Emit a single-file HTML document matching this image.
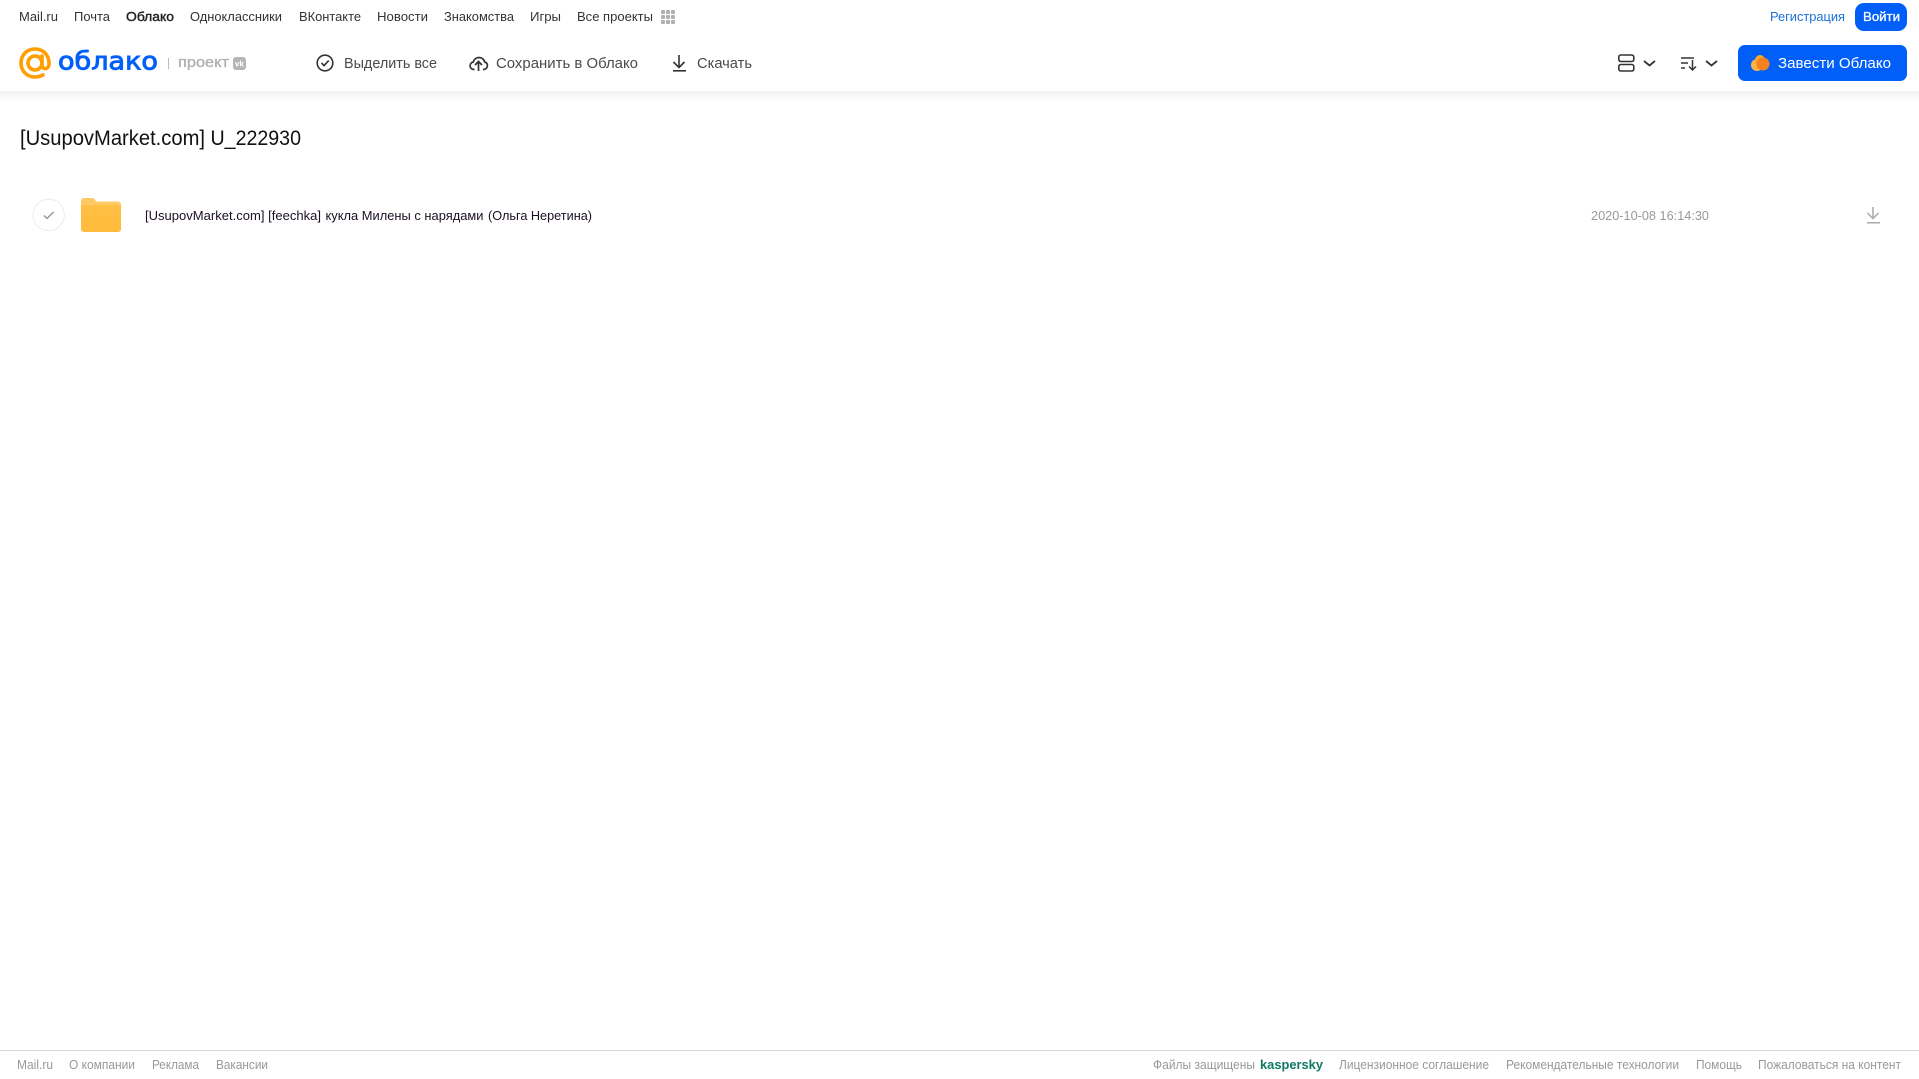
<!DOCTYPE html>
<html lang="ru"><head><meta charset="utf-8"><title>Облако</title>
<style>
html,body{margin:0;padding:0;background:#fff;width:1919px;height:1079px;overflow:hidden}
svg{display:block;position:absolute;left:0;top:0}
text{font-family:"Liberation Sans",sans-serif}
.n{font-size:13px;fill:#333}
.a{font-size:15px;fill:#4a4a4a}
.f{font-size:12.5px;fill:#999}
</style></head><body>
<svg width="1919" height="1079" viewBox="0 0 1919 1079" xmlns="http://www.w3.org/2000/svg">
<defs><linearGradient id="s" x1="0" y1="0" x2="0" y2="1"><stop offset="0" stop-color="#f1f1f1"/><stop offset="1" stop-color="#fff"/></linearGradient>
<linearGradient id="fd" x1="0" y1="0" x2="0" y2="1"><stop offset="0" stop-color="#ffc044"/><stop offset="1" stop-color="#ffbb3c"/></linearGradient></defs>
<rect x="0" y="91" width="1919" height="10" fill="url(#s)"/>
<text class="n" x="19" y="21" textLength="39" lengthAdjust="spacingAndGlyphs">Mail.ru</text>
<text class="n" x="74" y="21" textLength="36" lengthAdjust="spacingAndGlyphs">Почта</text>
<text class="n" x="126" y="21" textLength="48" lengthAdjust="spacingAndGlyphs" style="fill:#222;stroke:#222;stroke-width:.4">Облако</text>
<text class="n" x="190" y="21" textLength="92" lengthAdjust="spacingAndGlyphs">Одноклассники</text>
<text class="n" x="299" y="21" textLength="62" lengthAdjust="spacingAndGlyphs">ВКонтакте</text>
<text class="n" x="377" y="21" textLength="51" lengthAdjust="spacingAndGlyphs">Новости</text>
<text class="n" x="444" y="21" textLength="70" lengthAdjust="spacingAndGlyphs">Знакомства</text>
<text class="n" x="530" y="21" textLength="31" lengthAdjust="spacingAndGlyphs">Игры</text>
<text class="n" x="577" y="21" textLength="76" lengthAdjust="spacingAndGlyphs">Все проекты</text>
<g fill="#b0b0b0"><rect x="661" y="10" width="4" height="4" rx="1"/><rect x="666" y="10" width="4" height="4" rx="1"/><rect x="671" y="10" width="4" height="4" rx="1"/><rect x="661" y="15" width="4" height="4" rx="1"/><rect x="666" y="15" width="4" height="4" rx="1"/><rect x="671" y="15" width="4" height="4" rx="1"/><rect x="661" y="20" width="4" height="4" rx="1"/><rect x="666" y="20" width="4" height="4" rx="1"/><rect x="671" y="20" width="4" height="4" rx="1"/></g>

<!-- logo -->
<g fill="none" stroke="#ff9e00" stroke-width="3.600" stroke-linecap="round">
<circle cx="35" cy="63" r="7"/>
<path d="M42 56v9c0 5 7 5 7 -1v-1c0 -8 -6 -14 -14 -14s-14 6 -14 14s6 14 14 14c3 0 6 -1 8 -2"/>
</g>
<text x="58" y="69.500" font-size="25" fill="#005ff9" stroke="#005ff9" stroke-width=".9" textLength="100" lengthAdjust="spacingAndGlyphs" style="font-family:'DejaVu Sans',sans-serif">облако</text>
<rect x="168" y="58" width="1" height="11" fill="#bbb"/>
<text x="178" y="67" font-size="15" fill="#b0b0b0" stroke="#b0b0b0" stroke-width=".35" textLength="51" lengthAdjust="spacingAndGlyphs">проект</text>
<rect x="233" y="57" width="13" height="13" rx="3" fill="#b5b5b5"/>
<text x="235" y="66.500" font-size="8" font-weight="700" fill="#fff" textLength="9" lengthAdjust="spacingAndGlyphs">vk</text>

<!-- actions -->
<circle cx="325" cy="63" r="7.800" fill="none" stroke="#333" stroke-width="1.600"/>
<path d="M321.500 63l2.600 2.600l4.600-5" fill="none" stroke="#333" stroke-width="1.600"/>
<text class="a" x="344" y="68" textLength="93" lengthAdjust="spacingAndGlyphs">Выделить все</text>
<path d="M474.500 69.500h-.5c-2.300 0-3.900-1.700-3.900-3.800c0-1.900 1.300-3.400 3.200-3.700c.7-2.700 2.900-4.500 5.700-4.500c2.800 0 5.100 1.900 5.700 4.500c1.600.4 2.700 1.800 2.700 3.600c0 2.100-1.600 3.900-3.800 3.900h-.6M478.500 71v-9M475 65l3.500-3.500l3.500 3.500" fill="none" stroke="#333" stroke-width="1.700"/>
<text class="a" x="496" y="68" textLength="142" lengthAdjust="spacingAndGlyphs">Сохранить в Облако</text>
<path d="M679 55v12M673.500 62l5.500 5.500l5.500-5.500" fill="none" stroke="#333" stroke-width="1.600"/><rect x="673" y="70" width="13" height="1.600" fill="#333"/>
<text class="a" x="697" y="68" textLength="55" lengthAdjust="spacingAndGlyphs">Скачать</text>

<!-- right top -->
<text x="1770" y="21" font-size="13" fill="#1a6fd8" textLength="75" lengthAdjust="spacingAndGlyphs">Регистрация</text>
<rect x="1855" y="3" width="52" height="28" rx="9" fill="#005ff9"/>
<text x="1863" y="21" font-size="13" fill="#fff" stroke="#fff" stroke-width=".3" textLength="37" lengthAdjust="spacingAndGlyphs">Войти</text>

<rect x="1618.800" y="55" width="15" height="6.500" rx="2" fill="none" stroke="#333" stroke-width="1.600"/>
<rect x="1618.800" y="64.500" width="15" height="6.500" rx="2" fill="none" stroke="#333" stroke-width="1.600"/>
<path d="M1644 61l5.500 4.500l5.500-4.500" fill="none" stroke="#333" stroke-width="1.800"/>
<path d="M1681 58h13M1681 63h7M1681 68h4M1692.500 60v10M1689 66.500l3.500 3.500l3.500-3.500" fill="none" stroke="#333" stroke-width="1.500"/>
<path d="M1706 61l5.500 4.500l5.500-4.500" fill="none" stroke="#333" stroke-width="1.800"/>

<rect x="1738" y="45" width="169" height="36" rx="7" fill="#005ff9"/>
<circle cx="1757" cy="65" r="6" fill="#ffb347"/>
<circle cx="1760" cy="60" r="5" fill="#ffa726"/>
<circle cx="1763" cy="64" r="6.500" fill="#f58220"/>
<text x="1778" y="68" font-size="15" fill="#fff" textLength="113" lengthAdjust="spacingAndGlyphs">Завести Облако</text>

<!-- content -->
<text x="20" y="145" font-size="21" fill="#111" textLength="185" lengthAdjust="spacingAndGlyphs">[UsupovMarket.com]</text>
<text x="210.500" y="145" font-size="21" fill="#111" textLength="90.500" lengthAdjust="spacingAndGlyphs">U_222930</text>
<circle cx="48.700" cy="215" r="15.700" fill="#fff" stroke="#ececec"/>
<path d="M44 215.500l3 3l6.500-6.500" fill="none" stroke="#999" stroke-width="1.500"/>
<path d="M81 201a3 3 0 0 1 3-3h8c2 0 3 1.500 4 3.500h22a3 3 0 0 1 3 3v4h-40z" fill="#ffca66"/>
<path d="M81 205h40v24a3 3 0 0 1-3 3h-34a3 3 0 0 1-3-3z" fill="url(#fd)"/>
<text x="145" y="220" font-size="13" fill="#1c1020" textLength="176" lengthAdjust="spacingAndGlyphs">[UsupovMarket.com] [feechka]</text>
<text x="325.500" y="220" font-size="13" fill="#1c1020" textLength="158" lengthAdjust="spacingAndGlyphs">кукла Милены с нарядами</text>
<text x="488" y="220" font-size="13" fill="#1c1020" textLength="104" lengthAdjust="spacingAndGlyphs">(Ольга Неретина)</text>
<text x="1591" y="220" font-size="13" fill="#999" textLength="118" lengthAdjust="spacingAndGlyphs">2020-10-08 16:14:30</text>
<path d="M1873 207v11M1867.500 213l5.500 5.500l5.500-5.500" fill="none" stroke="#aaa" stroke-width="1.500"/><rect x="1867" y="222" width="13" height="1.500" fill="#aaa"/>

<!-- footer -->
<rect x="0" y="1050" width="1919" height="1" fill="#d8d8d8"/>
<text class="f" x="17" y="1069" textLength="36" lengthAdjust="spacingAndGlyphs">Mail.ru</text>
<text class="f" x="69" y="1069" textLength="66" lengthAdjust="spacingAndGlyphs">О компании</text>
<text class="f" x="152" y="1069" textLength="47" lengthAdjust="spacingAndGlyphs">Реклама</text>
<text class="f" x="216" y="1069" textLength="52" lengthAdjust="spacingAndGlyphs">Вакансии</text>
<text class="f" x="1153" y="1069" textLength="102" lengthAdjust="spacingAndGlyphs">Файлы защищены</text>
<text x="1260" y="1069" font-size="13" font-weight="700" fill="#0f7a64" textLength="63" lengthAdjust="spacingAndGlyphs">kaspersky</text>
<text class="f" x="1339" y="1069" textLength="150" lengthAdjust="spacingAndGlyphs">Лицензионное соглашение</text>
<text class="f" x="1506" y="1069" textLength="173" lengthAdjust="spacingAndGlyphs">Рекомендательные технологии</text>
<text class="f" x="1696" y="1069" textLength="46" lengthAdjust="spacingAndGlyphs">Помощь</text>
<text class="f" x="1758" y="1069" textLength="143" lengthAdjust="spacingAndGlyphs">Пожаловаться на контент</text>
</svg>
</body></html>
